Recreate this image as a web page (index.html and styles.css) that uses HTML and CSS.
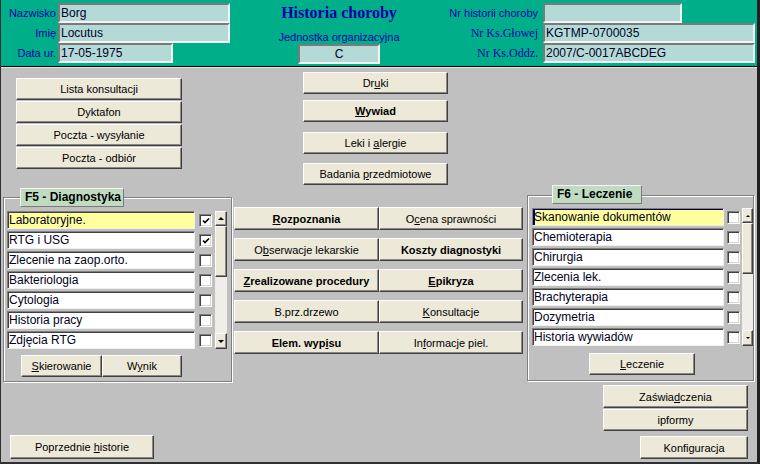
FILE: index.html
```html
<!DOCTYPE html>
<html lang="pl">
<head>
<meta charset="utf-8">
<title>Historia choroby</title>
<link rel="stylesheet" href="styles.css">
</head>
<body>
<div class="app">
  <header class="hdr">
    <div class="hdr-left">
      <span class="lbl">Nazwisko</span><div class="fld w171">Borg</div>
      <span class="lbl">Imię</span><div class="fld w171">Locutus</div>
      <span class="lbl">Data ur.</span><div class="fld w114">17-05-1975</div>
    </div>
    <div class="hdr-mid">
      <div class="title">Historia choroby</div>
      <div class="unit-lbl">Jednostka organizacyjna</div>
      <div class="fld unit">C</div>
    </div>
    <div class="hdr-right">
      <span class="lbl">Nr historii choroby</span><div class="fld w138"></div>
      <span class="lbl serif">Nr Ks.Głowej</span><div class="fld w211">KGTMP-0700035</div>
      <span class="lbl serif">Nr Ks.Oddz.</span><div class="fld w211">2007/C-0017ABCDEG</div>
    </div>
  </header>

  <main class="main">
    <section class="col col1">
      <div class="stack">
        <div class="btn"><span>Lista konsultacji</span></div>
        <div class="btn"><span>Dyktafon</span></div>
        <div class="btn"><span>Poczta - wysyłanie</span></div>
        <div class="btn"><span>Poczta - odbiór</span></div>
      </div>

      <div class="grp g5">
        <div class="legend">F5 - Diagnostyka</div>
        <div class="lst">
          <div class="rows">
            <div class="row"><div class="item sel">Laboratoryjne.</div><span class="chk"><svg viewBox="0 0 8 8" width="8" height="8"><path d="M1 3.5 L3 5.5 L7 1.5" fill="none" stroke="#000" stroke-width="1.6"/></svg></span></div>
            <div class="row"><div class="item">RTG i USG</div><span class="chk"><svg viewBox="0 0 8 8" width="8" height="8"><path d="M1 3.5 L3 5.5 L7 1.5" fill="none" stroke="#000" stroke-width="1.6"/></svg></span></div>
            <div class="row"><div class="item">Zlecenie na zaop.orto.</div><span class="chk"></span></div>
            <div class="row"><div class="item">Bakteriologia</div><span class="chk"></span></div>
            <div class="row"><div class="item">Cytologia</div><span class="chk"></span></div>
            <div class="row"><div class="item">Historia pracy</div><span class="chk"></span></div>
            <div class="row"><div class="item">Zdjęcia RTG</div><span class="chk"></span></div>
          </div>
          <div class="sb">
            <div class="sb-btn"><span class="tri up"></span></div>
            <div class="sb-thumb"></div>
            <div class="sb-track"></div>
            <div class="sb-btn dn"><span class="tri down"></span></div>
          </div>
        </div>
        <div class="grp-btns">
          <div class="btn w81"><span><u>S</u>kierowanie</span></div>
          <div class="btn w80"><span>W<u>y</u>nik</span></div>
        </div>
      </div>

      <div class="btn prev"><span>Poprzednie <u>h</u>istorie</span></div>
    </section>

    <section class="col col2">
      <div class="btn top t1"><span>Dr<u>u</u>ki</span></div>
      <div class="btn top t2 b"><span><u>W</u>ywiad</span></div>
      <div class="btn top t3"><span>Leki i <u>a</u>lergie</span></div>
      <div class="btn top t4"><span>Badania <u>p</u>rzedmiotowe</span></div>
      <div class="grid">
        <div class="btn g b"><span><u>R</u>ozpoznania</span></div>
        <div class="btn g"><span>O<u>c</u>ena sprawności</span></div>
        <div class="btn g"><span>O<u>b</u>serwacje lekarskie</span></div>
        <div class="btn g b"><span>Koszty diagnostyki</span></div>
        <div class="btn g b"><span><u>Z</u>realizowane procedury</span></div>
        <div class="btn g b"><span><u>E</u>pikryza</span></div>
        <div class="btn g"><span>B.prz.drzewo</span></div>
        <div class="btn g"><span><u>K</u>onsultacje</span></div>
        <div class="btn g b"><span>Elem. wyp<u>i</u>su</span></div>
        <div class="btn g"><span>In<u>f</u>ormacje piel.</span></div>
      </div>
    </section>

    <section class="col col3">
      <div class="grp g6">
        <div class="legend">F6 - Leczenie</div>
        <div class="lst">
          <div class="rows">
            <div class="row"><div class="item sel caret">Skanowanie dokumentów</div><span class="chk"></span></div>
            <div class="row"><div class="item">Chemioterapia</div><span class="chk"></span></div>
            <div class="row"><div class="item">Chirurgia</div><span class="chk"></span></div>
            <div class="row"><div class="item">Zlecenia lek.</div><span class="chk"></span></div>
            <div class="row"><div class="item">Brachyterapia</div><span class="chk"></span></div>
            <div class="row"><div class="item">Dozymetria</div><span class="chk"></span></div>
            <div class="row"><div class="item">Historia wywiadów</div><span class="chk"></span></div>
          </div>
          <div class="sb narrow">
            <div class="sb-btn"><span class="tri up sm"></span></div>
            <div class="sb-thumb"></div>
            <div class="sb-track"></div>
            <div class="sb-btn dn"><span class="tri down sm"></span></div>
          </div>
        </div>
        <div class="btn lecz"><span><u>L</u>eczenie</span></div>
      </div>
      <div class="btn zasw"><span>Zaświa<u>d</u>czenia</span></div>
      <div class="btn ipf"><span>ipformy</span></div>
      <div class="btn konf"><span>Konfiguracja</span></div>
    </section>
  </main>
</div>
</body>
</html>
```

FILE: styles.css
```css
html, body {
  margin: 0;
  padding: 0;
  background: #c0c0c0;
}

.app {
  width: 760px;
  height: 464px;
  box-sizing: border-box;
  border-left: 1px solid #303030;
  border-right: 3px solid #202020;
  border-bottom: 2px solid #303030;
  background: #c0c0c0;
  font-family: "Liberation Sans", Arial, sans-serif;
  overflow: hidden;
}

/* ---------- header ---------- */
.hdr {
  height: 66px;
  background: #00ae8a;
  border-bottom: 1px solid #000;
  display: flex;
}

.hdr-left {
  width: 257px;
  padding-top: 3px;
  display: grid;
  grid-template-columns: 55px auto;
  grid-auto-rows: 20px;
  column-gap: 2px;
  align-content: start;
  justify-items: start;
}

.hdr-right {
  padding-top: 3px;
  display: grid;
  grid-template-columns: 118px auto;
  grid-auto-rows: 20px;
  column-gap: 5px;
  align-content: start;
  justify-items: start;
}

.lbl {
  justify-self: end;
  align-self: center;
  font-size: 11px;
  color: #0000a8;
  white-space: nowrap;
}

.lbl.serif {
  font-family: "Liberation Serif", "Times New Roman", serif;
  font-size: 12px;
}

.fld {
  box-sizing: border-box;
  height: 20px;
  background: #b4dad7;
  border: 2px solid;
  border-color: #7a7a7a #f4f4f4 #f4f4f4 #7a7a7a;
  font-size: 12px;
  color: #000028;
  padding-left: 1px;
  line-height: 16px;
  white-space: nowrap;
}

.w171 { width: 172px; }
.w114 { width: 115px; }
.w138 { width: 139px; }
.w211 { width: 212px; }

.hdr-mid {
  width: 162px;
  display: flex;
  flex-direction: column;
  align-items: center;
}

.title {
  font-family: "Liberation Serif", "Times New Roman", serif;
  font-weight: bold;
  font-size: 16px;
  color: #0000a8;
  margin-top: 4px;
  line-height: 18px;
}

.unit-lbl {
  font-size: 11px;
  color: #0000a8;
  margin-top: 9px;
  line-height: 13px;
}

.fld.unit {
  width: 82px;
  margin-top: 0;
  text-align: center;
  padding-left: 0;
}

/* ---------- main ---------- */
.main {
  border-top: 1px solid #e2e2e2;
  display: flex;
  align-items: flex-start;
}

.col {
  display: flex;
  flex-direction: column;
  align-items: flex-start;
}

.col1 { width: 232px; }
.col2 { width: 292px; }
.col3 { width: 232px; }

.btn {
  box-sizing: border-box;
  height: 22px;
  background: #ece9d8;
  border: 1px solid;
  border-color: #ffffff #404040 #404040 #ffffff;
  box-shadow: inset -1px -1px 0 #8c8a80;
  font-size: 11px;
  color: #000;
  display: flex;
  align-items: center;
  justify-content: center;
  white-space: nowrap;
}

.btn.b { font-weight: bold; }
.btn u { text-underline-offset: 1px; }

.stack {
  margin-top: 10px;
  margin-left: 15px;
  display: flex;
  flex-direction: column;
  gap: 1px;
}
.stack .btn { width: 166px; }

/* group boxes */
.grp {
  position: relative;
  box-sizing: border-box;
  border: 1px solid #808080;
  box-shadow: inset 1px 1px 0 #fff, 1px 1px 0 #fff;
}

.legend {
  position: absolute;
  box-sizing: border-box;
  height: 19px;
  background: #c0dcc0;
  border: 1px solid;
  border-color: #f4f4f4 #7a7a7a #7a7a7a #f4f4f4;
  font-size: 12px;
  font-weight: bold;
  color: #000;
  line-height: 17px;
  padding: 0 4px;
  white-space: nowrap;
}

.g5 {
  margin-top: 28px;
  margin-left: 2px;
  width: 229px;
  height: 185px;
  padding: 13px 0 0 3px;
}
.g5 .legend { left: 16px; top: -10px; width: 104px; }

.g6 {
  margin-top: 127px;
  margin-left: 2px;
  width: 227px;
  height: 186px;
  padding: 12px 0 0 4px;
}
.g6 .legend { left: 24px; top: -11px; width: 90px; }

.lst {
  display: flex;
  align-items: flex-start;
}

.rows {
  display: flex;
  flex-direction: column;
  gap: 2px;
}

.row {
  display: flex;
  align-items: flex-start;
}

.item {
  box-sizing: border-box;
  width: 188px;
  height: 18px;
  background: #fff;
  border: 1px solid;
  border-color: #808080 #f0f0f0 #f0f0f0 #808080;
  box-shadow: inset 1px 1px 0 #404040;
  font-size: 12px;
  line-height: 16px;
  padding-left: 1px;
  color: #000020;
  white-space: nowrap;
  overflow: hidden;
}
.g6 .item { width: 192px; }
.item.sel { background: #ffff9c; }
.item.caret { box-shadow: inset 2px 1px 0 #000060; }

.chk {
  box-sizing: border-box;
  width: 13px;
  height: 13px;
  margin-top: 3px;
  margin-left: 4px;
  background: #fff;
  border: 1px solid;
  border-color: #808080 #fff #fff #808080;
  box-shadow: inset 1px 1px 0 #404040, inset -1px -1px 0 #d8d6cc;
  display: flex;
  align-items: center;
  justify-content: center;
}
.g6 .chk { margin-left: 3px; }

.sb {
  box-sizing: border-box;
  width: 12px;
  height: 138px;
  margin-left: 3px;
  background: #efeee8;
  display: flex;
  flex-direction: column;
}
.sb.narrow { width: 11px; margin-left: 2px; }

.sb-btn, .sb-thumb {
  box-sizing: border-box;
  background: #ece9d8;
  border: 1px solid;
  border-color: #fff #404040 #404040 #fff;
  box-shadow: inset -1px -1px 0 #8c8a80;
}
.sb-btn {
  height: 15px;
  display: flex;
  align-items: center;
  justify-content: center;
}
.sb-btn.dn { height: 16px; }
.sb-thumb { height: 51px; }
.sb-track { flex: 1; }

.tri {
  width: 0;
  height: 0;
  border-left: 3px solid transparent;
  border-right: 3px solid transparent;
}
.tri.up { border-bottom: 3px solid #000; }
.tri.down { border-top: 3px solid #000; }
.tri.sm { border-left-width: 2px; border-right-width: 2px; }
.tri.sm.up { border-bottom-width: 2px; }
.tri.sm.down { border-top-width: 2px; }

.grp-btns {
  display: flex;
  margin-top: 6px;
  margin-left: 14px;
}
.w81 { width: 81px; }
.w80 { width: 80px; }

.prev {
  margin-top: 53px;
  margin-left: 9px;
  width: 144px;
  height: 24px;
}

/* column 2 */
.top { width: 145px; margin-left: 70px; }
.t1 { margin-top: 4px; }
.t2 { margin-top: 6px; }
.t3 { margin-top: 10px; }
.t4 { margin-top: 9px; }

.grid {
  margin-top: 22px;
  margin-left: 1px;
  display: grid;
  grid-template-columns: 145px 144px;
  grid-auto-rows: 23px;
  column-gap: 0;
  row-gap: 8px;
}
.btn.g { height: 23px; }

/* column 3 */
.lecz {
  margin-top: 7px;
  margin-left: 57px;
  width: 106px;
}
.zasw {
  margin-top: 4px;
  margin-left: 78px;
  width: 145px;
  height: 23px;
}
.ipf {
  margin-top: 1px;
  margin-left: 78px;
  width: 145px;
}
.konf {
  margin-top: 5px;
  margin-left: 115px;
  width: 108px;
  height: 23px;
}
```
